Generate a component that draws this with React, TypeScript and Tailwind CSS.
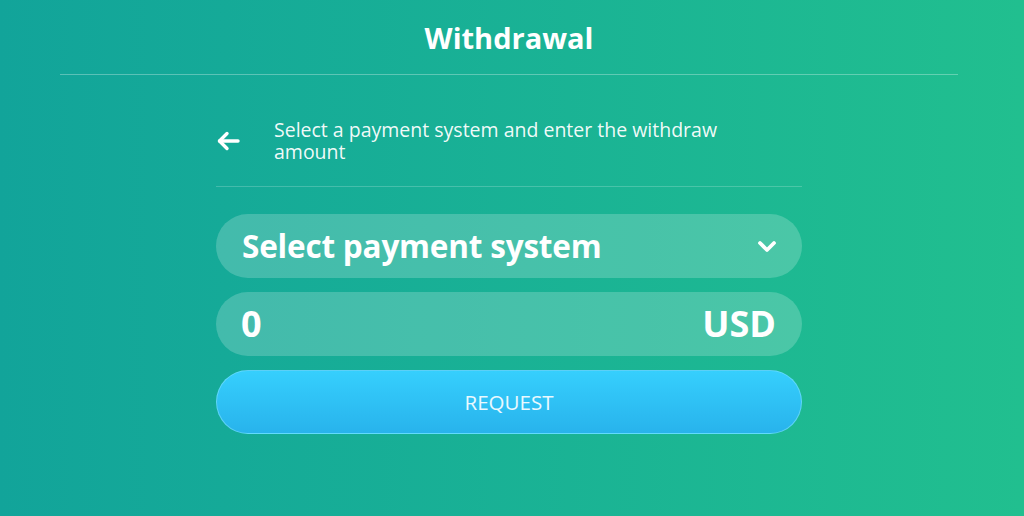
import React, { useState } from 'react';

function App() {
  const [amount] = useState('0');

  return (
    <div
      className="w-[1024px] h-[516px] overflow-hidden bg-gradient-to-r from-[#12a49a] to-[#21bf8f] text-white"
      style={{ fontFamily: '"Open Sans", "Noto Sans", sans-serif' }}
    >
      <div className="w-[1018px]">
        <div className="mx-[60px] h-[75px] border-b border-white/30 flex items-center justify-center">
          <h1 className="text-[29px] font-bold leading-none">Withdrawal</h1>
        </div>

        <div className="w-[586px] mx-auto">
          <div className="h-[112px] border-b border-white/20 flex items-center pt-[20px]">
            <button className="w-[58px] h-[30px] flex items-center">
              <svg width="25" height="22" viewBox="0 0 25 22" fill="none" stroke="white" strokeWidth="3.4" strokeLinecap="round" strokeLinejoin="round">
                <path d="M22 11H3.5" />
                <path d="M11 3.5L3.5 11L11 18.5" />
              </svg>
            </button>
            <p className="text-[19.5px] leading-[22px] text-white/95 w-[480px]">
              Select a payment system and enter the withdraw amount
            </p>
          </div>

          <div className="flex flex-col gap-[14px] pt-[27px]">
            <div className="h-[64px] rounded-full bg-white/20 flex items-center justify-between pl-[26px] pr-[25px]">
              <span className="text-[31.5px] font-bold tracking-[-0.2px]">Select payment system</span>
              <svg width="20" height="13" viewBox="0 0 20 13" fill="none" stroke="white" strokeWidth="3.8" strokeLinecap="round" strokeLinejoin="round">
                <path d="M3 3L10 10L17 3" />
              </svg>
            </div>

            <div className="h-[64px] rounded-full bg-white/20 flex items-center justify-between pl-[25px] pr-[26px]">
              <span className="text-[36px] font-bold leading-none">{amount}</span>
              <span className="text-[36px] font-bold leading-none">USD</span>
            </div>

            <button className="h-[64px] rounded-full bg-gradient-to-b from-[#36cffd] to-[#28b3ec] border border-[#7fe3ff]/60 flex items-center justify-center text-[20.5px] text-white/90 font-normal">
              REQUEST
            </button>
          </div>
        </div>
      </div>
    </div>
  );
}

export default App;
